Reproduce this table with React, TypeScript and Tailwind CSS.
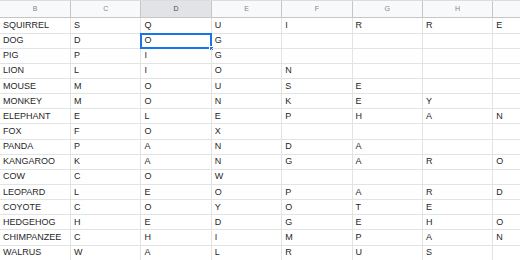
import React from "react";

const cols = ["B", "C", "D", "E", "F", "G", "H", ""];
const rows: string[][] = [
  ["SQUIRREL", "S", "Q", "U", "I", "R", "R", "E"],
  ["DOG", "D", "O", "G"],
  ["PIG", "P", "I", "G"],
  ["LION", "L", "I", "O", "N"],
  ["MOUSE", "M", "O", "U", "S", "E"],
  ["MONKEY", "M", "O", "N", "K", "E", "Y"],
  ["ELEPHANT", "E", "L", "E", "P", "H", "A", "N"],
  ["FOX", "F", "O", "X"],
  ["PANDA", "P", "A", "N", "D", "A"],
  ["KANGAROO", "K", "A", "N", "G", "A", "R", "O"],
  ["COW", "C", "O", "W"],
  ["LEOPARD", "L", "E", "O", "P", "A", "R", "D"],
  ["COYOTE", "C", "O", "Y", "O", "T", "E"],
  ["HEDGEHOG", "H", "E", "D", "G", "E", "H", "O"],
  ["CHIMPANZEE", "C", "H", "I", "M", "P", "A", "N"],
  ["WALRUS", "W", "A", "L", "R", "U", "S"],
];

const gridCols = "grid grid-cols-[71px_repeat(6,70.4px)_70.6px_1fr]";

export default function App() {
  return (
    <div
      className="w-[520px] h-[260px] overflow-hidden bg-white"
      style={{ fontFamily: '"Liberation Sans", Arial, sans-serif' }}
    >
      <div className={`${gridCols} h-[18.4px] bg-[#f8f9fa] border-t border-[#dadce0]`}>
        {cols.map((c, i) => (
          <div
            key={i}
            className={`flex items-center justify-center border-r border-b border-[#c4c7c5] text-[7px] ${
              c === "D" ? "bg-[#e1e3e6] text-[#4a4d51]" : "text-[#80868b]"
            }`}
          >
            {c}
          </div>
        ))}
        <div className="border-b border-[#c4c7c5]" />
      </div>
      {rows.map((r, ri) => (
        <div key={ri} className={`${gridCols} h-[15.15px]`}>
          {Array.from({ length: 9 }).map((_, ci) => {
            const selected = ri === 1 && ci === 2;
            return (
              <div
                key={ci}
                className="relative flex items-center pl-[3px] border-r border-b border-[#e2e3e3] text-[9px] text-[#1f1f1f] whitespace-nowrap overflow-visible leading-none"
              >
                {r[ci] ?? ""}
                {selected && (
                  <div className="absolute left-[-1px] top-[-1px] right-[-1px] bottom-[-1px] border-2 border-[#1a73e8]">
                    <div className="absolute right-[-4px] bottom-[-4px] w-[5px] h-[5px] bg-[#1a73e8] border border-white" />
                  </div>
                )}
              </div>
            );
          })}
        </div>
      ))}
    </div>
  );
}
